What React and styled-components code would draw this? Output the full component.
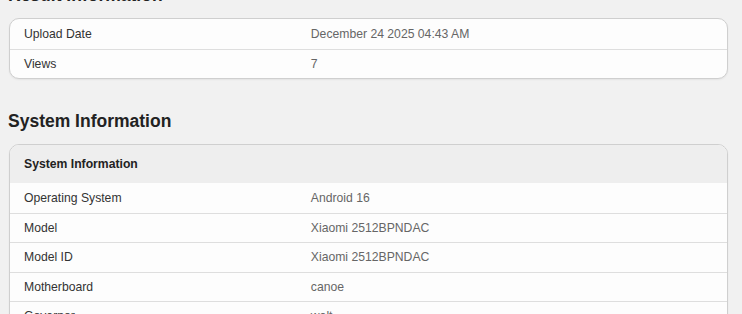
import React from "react";
import styled, { createGlobalStyle } from "styled-components";

const Global = createGlobalStyle`
  html, body {
    margin: 0;
    padding: 0;
    background: #f1f1f1;
    overflow: hidden;
  }
  body {
    font-family: "Liberation Sans", Arial, sans-serif;
    color: #333;
  }
`;

const Page = styled.main`
  margin-top: -15px;
  padding: 0 14px 0 8px;
`;

const Section = styled.section`
  & + & {
    margin-top: 32.5px;
  }
`;

const Heading = styled.h2`
  margin: 0 0 12px;
  font-size: 17.5px;
  line-height: 21px;
  font-weight: 700;
  color: #222;
`;

const Card = styled.div`
  margin-left: 1px;
  background: #fdfdfd;
  border: 1px solid #cfcfcf;
  border-radius: 10px;
  overflow: hidden;
  box-shadow: 0 1px 2px rgba(0, 0, 0, 0.06);
`;

const CardHeader = styled.div`
  display: flex;
  align-items: center;
  height: 38px;
  padding: 0 14px;
  background: #eeeeee;
  font-size: 12.2px;
  font-weight: 700;
  color: #222;
`;

const Row = styled.div`
  display: grid;
  grid-template-columns: 40% 60%;
  align-items: center;
  height: ${(p) => p.$h || 29.5}px;
  box-sizing: border-box;
  font-size: 12.2px;
  & + & {
    border-top: 1px solid #dedede;
  }
`;

const Label = styled.div`
  padding: 0 14px;
  color: #333;
`;

const Value = styled.div`
  padding: 0 14px;
  color: #666;
`;

const resultRows = [
  ["Upload Date", "December 24 2025 04:43 AM"],
  ["Views", "7"],
];

const systemRows = [
  ["Operating System", "Android 16"],
  ["Model", "Xiaomi 2512BPNDAC"],
  ["Model ID", "Xiaomi 2512BPNDAC"],
  ["Motherboard", "canoe"],
  ["Governor", "walt"],
];

export default function App() {
  return (
    <>
      <Global />
      <Page>
        <Section>
          <Heading>Result Information</Heading>
          <Card>
            {resultRows.map(([k, v], i) => (
              <Row key={k} $h={i === 0 ? 29.5 : 29}>
                <Label>{k}</Label>
                <Value>{v}</Value>
              </Row>
            ))}
          </Card>
        </Section>
        <Section>
          <Heading>System Information</Heading>
          <Card>
            <CardHeader>System Information</CardHeader>
            {systemRows.map(([k, v]) => (
              <Row key={k}>
                <Label>{k}</Label>
                <Value>{v}</Value>
              </Row>
            ))}
          </Card>
        </Section>
      </Page>
    </>
  );
}
